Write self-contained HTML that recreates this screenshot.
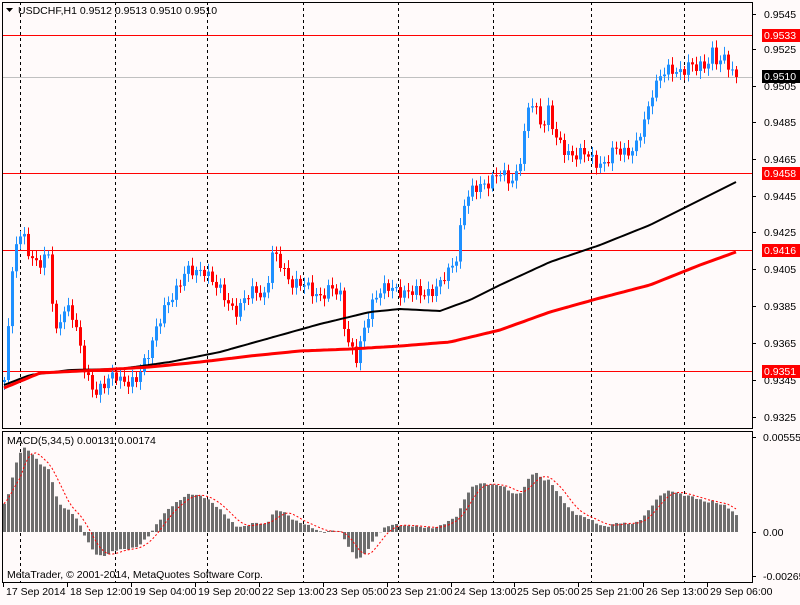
<!DOCTYPE html><html><head><meta charset="utf-8"><style>
body{margin:0;background:#fffafa;width:800px;height:600px;overflow:hidden}
svg text{font-family:"Liberation Sans",sans-serif;font-size:10.5px}
</style></head><body>
<svg id="s" width="800" height="600" xmlns="http://www.w3.org/2000/svg"></svg>
<script>
var s=document.getElementById('s'),o='';
function L(x1,y1,x2,y2,c,w,d){o+='<line x1="'+x1+'" y1="'+y1+'" x2="'+x2+'" y2="'+y2+'" stroke="'+c+'" stroke-width="'+(w||1)+'"'+(d?' stroke-dasharray="'+d+'"':'')+'/>';}
function R(x,y,w,h,c){o+='<rect x="'+x+'" y="'+y+'" width="'+w+'" height="'+h+'" fill="'+c+'"/>';}
function T(x,y,t,c){o+='<text x="'+x+'" y="'+y+'" fill="'+(c||'#000')+'">'+t+'</text>';}
function interp(k,x){for(var i=0;i<k.length-1;i++){if(x<=k[i+1][0]){var t=(x-k[i][0])/(k[i+1][0]-k[i][0]);return k[i][1]+t*(k[i+1][1]-k[i][1]);}}return k[k.length-1][1];}
[20,115,207,303,398,493,591,684].forEach(function(x){L(x+.5,2,x+.5,428,'#000',1,'3,3');L(x+.5,431,x+.5,582,'#000',1,'3,3');});
R(2,77,750,1,'#c0c0c0');
R(2,35,750,1,'#ff0000');R(2,173,750,1,'#ff0000');R(2,250,750,1,'#ff0000');R(2,371,750,1,'#ff0000');
var K=[[4,380],[10,290],[16,240],[22,235],[30,260],[40,260],[48,255],[55,340],[62,310],[70,305],[78,340],[85,375],[95,390],[105,385],[115,375],[125,380],[135,385],[145,360],[155,330],[165,310],[175,290],[185,270],[195,275],[205,268],[215,285],[225,300],[235,310],[245,300],[255,290],[265,295],[272,255],[280,265],[290,280],[300,285],[310,290],[320,295],[330,290],[340,295],[345,330],[350,345],[356,360],[362,340],[370,305],[378,290],[390,290],[400,290],[410,292],[420,295],[430,290],[440,285],[450,270],[458,250],[462,205],[470,195],[480,185],[490,180],[500,175],[510,180],[518,170],[525,130],[530,100],[536,110],[542,125],[548,110],[555,140],[565,150],[575,155],[585,155],[595,160],[605,165],[615,150],[625,150],[635,150],[645,120],[652,90],[660,75],[670,72],[680,70],[688,65],[695,70],[705,65],[712,50],[718,65],[725,60],[730,70],[736,75]];
var closes=[],prev=382;
for(var i=0;i<184;i++){var x=4+4*i;var c=interp(K,x)+Math.sin(i*2.3)*5+Math.sin(i*0.9)*3;if(i==183)c=77;
var op=prev,hi=Math.min(op,c)-3-Math.abs(Math.sin(i*1.7))*5,lo=Math.max(op,c)+3+Math.abs(Math.cos(i*1.3))*5;
var col=c<op?'#1e90ff':'#ff0000';
L(x+.5,hi,x+.5,lo,col);var t=Math.min(op,c),h=Math.max(1,Math.abs(op-c));R(x-1,t,3,h,col);
closes.push(c);prev=c;}
function poly(k,c,w){var p='';for(var x=4;x<=736;x+=4)p+=x+','+interp(k,x).toFixed(1)+' ';o+='<polyline points="'+p+'" fill="none" stroke="'+c+'" stroke-width="'+w+'" stroke-linejoin="round"/>';}
poly([[4,385],[30,375],[70,370],[120,369],[170,362],[220,352],[270,338],[320,324],[370,312],[400,309],[440,311],[470,300],[500,285],[550,262],[600,245],[650,225],[700,200],[736,182]],'#000',2);
poly([[4,388],[40,373],[100,370],[150,367],[200,362],[250,356],[300,351],[350,349],[400,346],[450,342],[500,330],[550,312],[600,298],[650,285],[700,265],[736,252]],'#ff0000',3);
var e5=closes[0],e34=closes[0]+40,m=[];var a5=2/6,a34=2/35;
for(var i=0;i<184;i++){e5+=a5*(closes[i]-e5);e34+=a34*(closes[i]-e34);m.push(Math.max(-45,Math.min(92,(e34-e5)*0.75)));}
var sig='';
for(var i=0;i<184;i++){var x=4+4*i,v=m[i];var y0=532;if(v>=0)R(x-1,y0-v,3,v,'#6e6e6e');else R(x-1,y0,3,-v,'#6e6e6e');
var sm=0,n=0;for(var j=Math.max(0,i-4);j<=i;j++){sm+=m[j];n++;}sig+=x+','+(y0-sm/n).toFixed(1)+' ';}
o+='<polyline points="'+sig+'" fill="none" stroke="#ff0000" stroke-width="1" stroke-dasharray="2,2"/>';
o+='<rect x="2.5" y="2.5" width="750" height="426" fill="none" stroke="#000"/>';
o+='<rect x="2.5" y="431.5" width="750" height="151" fill="none" stroke="#000"/>';
[['0.9545',14],['0.9525',49],['0.9505',86],['0.9485',122],['0.9465',159],['0.9445',196],['0.9425',232],['0.9405',269],['0.9385',306],['0.9365',343],['0.9345',380],['0.9325',417]].forEach(function(a){L(752,a[1]+.5,756,a[1]+.5,'#000');T(764,a[1]+4,a[0]);});
[[35,'0.9533','#ff0000'],[173,'0.9458','#ff0000'],[250,'0.9416','#ff0000'],[371,'0.9351','#ff0000'],[76,'0.9510','#000']].forEach(function(a){R(762,a[0]-6,38,13,a[2]);T(764,a[0]+4,a[1],'#fff');});
[['0.00555',437],['0.00',532],['-0.00265',576]].forEach(function(a){L(752,a[1]+.5,756,a[1]+.5,'#000');T(763,a[1]+4,a[0]);});
[['17 Sep 2014',3],['18 Sep 12:00',67],['19 Sep 04:00',131],['19 Sep 20:00',195],['22 Sep 13:00',259],['23 Sep 05:00',323],['23 Sep 21:00',387],['24 Sep 13:00',451],['25 Sep 05:00',514],['25 Sep 21:00',578],['26 Sep 13:00',643],['29 Sep 06:00',707]].forEach(function(a){L(a[1]+.5,582,a[1]+.5,587,'#000');T(a[1]+3,595,a[0]);});
o+='<polygon points="6,8 13,8 9.5,12" fill="#000"/>';
T(18,14,'USDCHF,H1  0.9512 0.9513 0.9510 0.9510');
T(7,444,'MACD(5,34,5) 0.00131 0.00174');
T(7,578,'MetaTrader, © 2001-2014, MetaQuotes Software Corp.');
s.innerHTML=o;
</script></body></html>
